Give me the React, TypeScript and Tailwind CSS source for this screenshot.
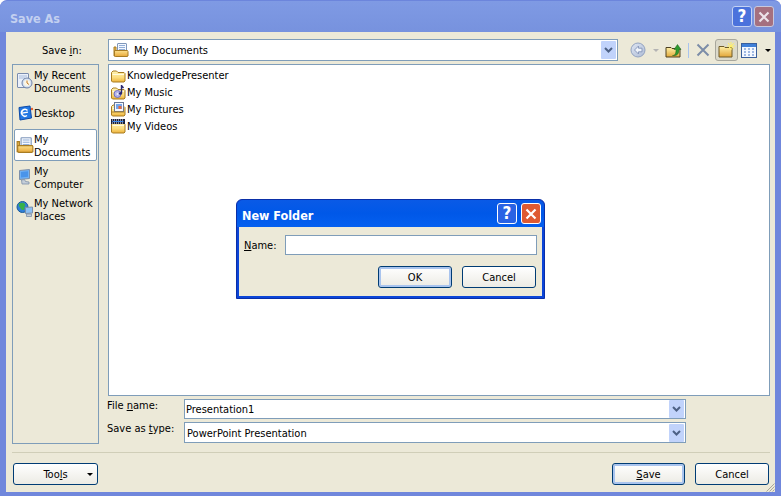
import React from 'react'

const ui = "font-['DejaVu_Sans_Condensed','Liberation_Sans',sans-serif]"

function FolderBase({ id }: { id: string }) {
  return (
    <>
      <defs>
        <linearGradient id={id} x1="0" y1="0" x2="0" y2="1">
          <stop offset="0" stopColor="#fff4b4" />
          <stop offset="0.6" stopColor="#fbdc7c" />
          <stop offset="1" stopColor="#eeb23a" />
        </linearGradient>
      </defs>
      <path d="M1.5 4.5 3 3h3.5L8 4.5h6L15 5.5V13l-1 1H2.5l-1-1Z" fill={`url(#${id})`} stroke="#a87c22" />
      <path d="M2.5 6.5h11.5" stroke="#fffbe0" />
    </>
  )
}

function PlainFolder() {
  return (
    <svg width="16" height="16" viewBox="0 0 16 16">
      <FolderBase id="plainFolder" />
    </svg>
  )
}

function MusicFolder() {
  return (
    <svg width="16" height="16" viewBox="0 0 16 16">
      <FolderBase id="musicFolder" />
      <circle cx="7.5" cy="9" r="3.5" fill="#b4b4ea" stroke="#6c6cc0" />
      <circle cx="7.5" cy="9" r="1" fill="#f0f0ff" />
      <path d="M11.5 8V0.5l2 2.5" stroke="#2a2870" strokeWidth="1.4" fill="none" />
      <ellipse cx="10.5" cy="8.5" rx="1.6" ry="1.2" fill="#2a2870" />
    </svg>
  )
}

function PicturesFolder() {
  return (
    <svg width="16" height="16" viewBox="0 0 16 16">
      <FolderBase id="picturesFolder" />
      <rect x="4.5" y="0.5" width="9" height="9" fill="#f6f8fd" stroke="#6a7894" />
      <rect x="6" y="2" width="6" height="5" fill="#74a6ec" />
      <rect x="8.5" y="4" width="3" height="3" fill="#ea6a3c" />
      <path d="M2 10h12.5" stroke="#a87c22" />
    </svg>
  )
}

function VideosFolder() {
  return (
    <svg width="16" height="16" viewBox="0 0 16 16">
      <FolderBase id="videosFolder" />
      <rect x="1" y="0" width="14" height="5" fill="#1a2038" />
      <path d="M2 1h12M2 4h12" stroke="#f0f2fa" strokeDasharray="1 1" />
      <rect x="2.5" y="2" width="11" height="1" fill="#3f8cf0" />
    </svg>
  )
}

function DocsFolder({ size = 16, id }: { size?: number; id: string }) {
  return (
    <svg width={size} height={size} viewBox="0 0 16 16">
      <defs>
        <linearGradient id={id} x1="0" y1="0" x2="0" y2="1">
          <stop offset="0" stopColor="#fce08c" />
          <stop offset="1" stopColor="#e8a838" />
        </linearGradient>
      </defs>
      <path d="M1 5h2V14h-2Z" fill="#e8b850" stroke="#a87c22" />
      <rect x="4.5" y="1.5" width="9" height="9" rx="0.5" fill="#f4f8ff" stroke="#7f97ba" />
      <path d="M6 3.5h6M6 5.5h6M6 7.5h6" stroke="#92aed6" />
      <path d="M1.5 8.5h13l.5 1V14l-1 .5H2.5l-1-.5Z" fill={`url(#${id})`} stroke="#a87c22" />
    </svg>
  )
}

function RecentIcon() {
  return (
    <svg width="18" height="18" viewBox="0 0 18 18">
      <rect x="1.5" y="1.5" width="11" height="14" rx="0.5" fill="#eaf0fa" stroke="#7a8cae" />
      <path d="M3 4h8M3 6h6" stroke="#a8bcdc" />
      <circle cx="11" cy="11" r="5" fill="#d9e4f2" stroke="#6f83a8" />
      <circle cx="11" cy="11" r="3" fill="#fbf6e4" />
      <path d="M11 8.5V11l2 1.5" stroke="#c47a28" fill="none" />
    </svg>
  )
}

function DesktopIcon() {
  return (
    <svg width="18" height="18" viewBox="0 0 18 18">
      <path d="M3 3.5 14 2l1.5 12-11.5 2Z" fill="#2278e4" stroke="#0c4aa8" strokeLinejoin="round" />
      <path d="M11.5 6.5A3.4 3.4 0 1 0 11 11.5" fill="none" stroke="#fff" strokeWidth="1.5" />
      <path d="M6 9.2l6-1" stroke="#fff" strokeWidth="1.3" />
      <circle cx="16" cy="5" r="1.2" fill="#e8602c" />
    </svg>
  )
}

function ComputerIcon() {
  return (
    <svg width="18" height="18" viewBox="0 0 18 18">
      <path d="M3.5 2.5 13.5 1.5v9l-10 1Z" fill="#6fb0f4" stroke="#7d90aa" strokeLinejoin="round" />
      <path d="M5 4l7-.7v5.5l-7 .7Z" fill="#4a94ea" />
      <path d="M5.5 12l3-.5 1 2 3.5.5v2H6Z" fill="#c4ced9" stroke="#7d90aa" strokeWidth="0.8" />
    </svg>
  )
}

function NetworkIcon() {
  return (
    <svg width="18" height="18" viewBox="0 0 18 18">
      <circle cx="6.5" cy="7" r="5.5" fill="#2f7fd8" stroke="#1c5b96" />
      <path d="M3 3.5c2-1 5-1 6 .5s-1 2.5-.5 4-2 3-3 1.5S2 6 3 3.5Z" fill="#36b04a" />
      <path d="M9.5 7.5l7-.5v6l-7 .5Z" fill="#8cc0f4" stroke="#7d90aa" strokeLinejoin="round" />
      <path d="M10.5 14h5v2.5h-5Z" fill="#c4ced9" stroke="#7d90aa" strokeWidth="0.8" />
    </svg>
  )
}

function Chevron() {
  return (
    <svg width="9" height="6" viewBox="0 0 9 6">
      <path d="M1 1l3.5 3.5L8 1" fill="none" stroke="#4d6185" strokeWidth="2" />
    </svg>
  )
}

function DropButton() {
  return (
    <div className="w-[15px] h-[18px] mr-px rounded-[1px] bg-[#c1d3fb] flex items-center justify-center">
      <Chevron />
    </div>
  )
}

function Caret({ color = 'border-t-black' }: { color?: string }) {
  return <div className={`w-0 h-0 border-x-[3px] border-x-transparent border-t-[3px] ${color}`} />
}

function HelpButton({ faded }: { faded?: boolean }) {
  return (
    <div
      className={`w-[20px] h-[21px] rounded-[3px] border flex items-center justify-center text-white text-[17px] font-bold leading-none ${
        faded ? 'bg-[#4b72dc] border-[#c4d2f4]' : 'bg-[#2a63e4] border-white'
      }`}
    >
      ?
    </div>
  )
}

function CloseButton({ faded }: { faded?: boolean }) {
  return (
    <div
      className={`w-[20px] h-[21px] rounded-[3px] border flex items-center justify-center ${
        faded ? 'bg-[#a5707f] border-[#c8c8dc]' : 'bg-[#df5a32] border-white'
      }`}
    >
      <svg width="12" height="12" viewBox="0 0 12 12">
        <path d="M1.5 1.5l9 9M10.5 1.5l-9 9" stroke={faded ? '#ece4ea' : '#fff'} strokeWidth="2.2" />
      </svg>
    </div>
  )
}

function Button({ children, isDefault, className = '' }: { children: React.ReactNode; isDefault?: boolean; className?: string }) {
  return (
    <div
      className={`h-[22px] pt-[2px] rounded-[3px] border border-[#003c74] bg-gradient-to-b from-white to-[#ecebe4] flex items-center justify-center text-[11px] text-black ${
        isDefault ? 'shadow-[inset_0_0_0_2px_#a9c4ee]' : ''
      } ${className}`}
    >
      {children}
    </div>
  )
}

function Toolbar() {
  return (
    <div className="flex items-center h-[22px] ml-[12px]">
      {/* back */}
      <svg width="16" height="16" viewBox="0 0 16 16">
        <defs>
          <linearGradient id="backFill" x1="0" y1="0" x2="1" y2="1">
            <stop offset="0" stopColor="#dfe6f2" />
            <stop offset="1" stopColor="#aebcd6" />
          </linearGradient>
        </defs>
        <circle cx="8" cy="8" r="7" fill="url(#backFill)" stroke="#93a3c0" />
        <path d="M8.5 4 4.5 8l4 4V9.8H12V6.2H8.5Z" fill="#f0f4fa" stroke="#8a9abc" />
      </svg>
      <div className="ml-[7px]">
        <Caret color="border-t-[#b4b4b4]" />
      </div>
      {/* up one level */}
      <svg className="ml-[6px]" width="17" height="17" viewBox="0 0 17 17">
        <defs>
          <linearGradient id="upFill" x1="0" y1="0" x2="0" y2="1">
            <stop offset="0" stopColor="#fff0a8" />
            <stop offset="1" stopColor="#e0a838" />
          </linearGradient>
        </defs>
        <path d="M1 5.5h5l1 1h8V15H1Z" fill="url(#upFill)" stroke="#4e4020" />
        <path d="M7.5 13.5c3 0 3.5-2.5 3.5-6H9l3.5-5 3.5 5h-2c0 4-1.5 6.5-6.5 6Z" fill="#2e9a2e" stroke="#1c5e1c" strokeWidth="0.5" />
      </svg>
      <div className="w-px h-[15px] bg-[#a9c4ee] ml-[6px]" />
      {/* delete */}
      <svg className="ml-[7px]" width="14" height="14" viewBox="0 0 14 14">
        <path d="M1.5 1.5l11 11M12.5 1.5l-11 11" stroke="#7c8da8" strokeWidth="2" />
      </svg>
      {/* new folder, hovered */}
      <div className="ml-[5px] w-[23px] h-[22px] rounded-[3px] border border-[#a8a79c] bg-[#dcdacb] flex items-center justify-center">
        <svg width="18" height="16" viewBox="0 0 18 16">
          <defs>
            <linearGradient id="newFill" x1="0" y1="0" x2="0" y2="1">
              <stop offset="0" stopColor="#fff0a8" />
              <stop offset="1" stopColor="#e2a436" />
            </linearGradient>
          </defs>
          <path d="M1 4.5h5l1 1h7V15H1Z" fill="url(#newFill)" stroke="#6e5a28" />
          <path d="M13 0v8M9 4h8M10 1l6 6M16 1l-6 6" stroke="#fff06a" />
        </svg>
      </div>
      {/* views */}
      <svg className="ml-[3px]" width="16" height="15" viewBox="0 0 16 15">
        <rect x="0.5" y="0.5" width="15" height="14" fill="#f4f8ff" stroke="#3a5f9c" />
        <rect x="1" y="1" width="14" height="3" fill="#3f7fd8" />
        <path d="M3 6h2M7 6h2M11 6h2M3 9h2M7 9h2M11 9h2M3 12h2M7 12h2M11 12h2" stroke="#4a7ac8" />
      </svg>
      <div className="ml-[8px]">
        <Caret />
      </div>
    </div>
  )
}

const places = [
  { icon: <RecentIcon />, label: ['My Recent', 'Documents'] },
  { icon: <DesktopIcon />, label: ['Desktop'] },
  { icon: <DocsFolder size={18} id="docsPlace" />, label: ['My', 'Documents'], active: true },
  { icon: <ComputerIcon />, label: ['My', 'Computer'] },
  { icon: <NetworkIcon />, label: ['My Network', 'Places'] },
]

const files = [
  { icon: <PlainFolder />, name: 'KnowledgePresenter' },
  { icon: <MusicFolder />, name: 'My Music' },
  { icon: <PicturesFolder />, name: 'My Pictures' },
  { icon: <VideosFolder />, name: 'My Videos' },
]

function NewFolderDialog() {
  return (
    <div className="absolute left-[236px] top-[199px] w-[309px] h-[100px] rounded-t-[6px] bg-[#0b45d8] flex flex-col border border-[#0a2fa8]">
      <div className="h-[27px] pl-[5px] pr-[3px] flex items-center justify-between rounded-t-[6px] bg-gradient-to-b from-[#0a5ae6] via-[#0058e8] to-[#0560f0]">
        <span className="text-white text-[12.5px] font-bold pt-[5px]">New Folder</span>
        <div className="flex gap-[4px]">
          <HelpButton />
          <CloseButton />
        </div>
      </div>
      <div className="flex-1 mx-[2px] mb-[2px] bg-[#ece9d8] flex flex-col">
        <div className="flex items-center mt-[8px] ml-[5px] h-[20px]">
          <span className="w-[41px] text-[11px] pt-[2px]">
            <u>N</u>ame:
          </span>
          <div className="w-[252px] h-[20px] bg-white border border-[#7f9db9]" />
        </div>
        <div className="flex justify-end gap-[10px] mt-[11px] mr-[6px]">
          <Button isDefault className="w-[74px]">OK</Button>
          <Button className="w-[74px]">Cancel</Button>
        </div>
      </div>
    </div>
  )
}

export default function App() {
  return (
    <div className={`${ui} relative w-[781px] h-[496px] overflow-hidden bg-white text-[11px] text-black`}>
      <div className="h-full rounded-t-[7px] bg-[#7087dc] flex flex-col border-t border-[#6c85dc]">
        {/* title bar */}
        <div className="h-[31px] flex items-center justify-between pl-[10px] pr-[7px] rounded-t-[7px] bg-gradient-to-b from-[#7f9ae4] to-[#7792de]">
          <span className="text-[#c3d0f0] text-[12.5px] font-bold pt-[6px]">Save As</span>
          <div className="flex gap-[2px]">
            <HelpButton faded />
            <CloseButton faded />
          </div>
        </div>

        {/* window body */}
        <div className="flex-1 mx-[6px] mb-[4px] bg-[#ece9d8] flex flex-col relative">
          <div className="flex items-center h-[22px] mt-[7px]">
            <div className="w-[102px] pl-[36px] pt-[2px]">
              Save <u>i</u>n:
            </div>
            <div className="w-[510px] h-[22px] bg-white border border-[#7f9db9] flex items-center justify-between">
              <div className="flex items-center gap-[5px] pl-[4px]">
                <DocsFolder id="docsCombo" />
                <span className="pt-[2px]">My Documents</span>
              </div>
              <DropButton />
            </div>
            <Toolbar />
          </div>

          <div className="flex mt-[3px] ml-[6px] h-[380px]">
            <div className="w-[87px] h-full border border-[#7f9db9] flex flex-col">
              {places.map((p) => (
                <div
                  key={p.label.join(' ')}
                  className={`h-[32px] mx-px flex items-center pl-[2px] leading-[13px] ${
                    p.active ? 'bg-white border border-[#7f9db9] rounded-[2px] pl-px' : ''
                  }`}
                >
                  <div className="w-[18px] shrink-0">{p.icon}</div>
                  <div className={p.label.length > 1 ? 'pt-[2px]' : ''}>
                    {p.label.map((line) => (
                      <div key={line} className="whitespace-nowrap">{line}</div>
                    ))}
                  </div>
                </div>
              ))}
            </div>

            <div className="ml-[9px] flex-1 flex flex-col">
              <div className="w-[662px] h-[332px] bg-white border border-[#7f9db9] pt-[2px] pl-[1px]">
                {files.map((f) => (
                  <div key={f.name} className="h-[17px] flex items-center gap-px">
                    {f.icon}
                    <span className="pt-[2px]">{f.name}</span>
                  </div>
                ))}
              </div>
              <div className="flex items-start mt-[3px] h-[20px]">
                <div className="w-[77px] -ml-px -mt-px">
                  File <u>n</u>ame:
                </div>
                <div className="w-[502px] h-[20px] bg-white border border-[#7f9db9] flex items-center justify-between pl-px">
                  <span className="pt-[2px]">Presentation1</span>
                  <DropButton />
                </div>
              </div>
              <div className="flex items-start mt-[3px] h-[21px]">
                <div className="w-[77px] -ml-px -mt-px">
                  Save as <u>t</u>ype:
                </div>
                <div className="w-[502px] h-[21px] bg-white border border-[#7f9db9] flex items-center justify-between pl-[2px]">
                  <span className="pt-[3px]">PowerPoint Presentation</span>
                  <DropButton />
                </div>
              </div>
            </div>
          </div>

          <div className="h-px bg-[#d0ceb8] mx-[6px] mt-[8px] w-[758px]" />

          <div className="flex items-center justify-between mt-[10px] ml-[7px] w-[756px]">
            <Button className="w-[85px] relative">
              <span>
                Too<u>l</u>s
              </span>
              <span className="absolute right-[4px] top-[9px]">
                <Caret />
              </span>
            </Button>
            <div className="flex gap-[10px]">
              <Button isDefault className="w-[73px]">
                <span>
                  <u>S</u>ave
                </span>
              </Button>
              <Button className="w-[74px]">Cancel</Button>
            </div>
          </div>

          {/* resize grip */}
          <svg className="absolute right-0 bottom-0" width="9" height="9" viewBox="0 0 9 9">
            <path d="M8.5 0.5l-8 8M8.5 3.5l-5 5M8.5 6.5l-2 2" stroke="#aca899" />
          </svg>
        </div>
      </div>
      <NewFolderDialog />
    </div>
  )
}
